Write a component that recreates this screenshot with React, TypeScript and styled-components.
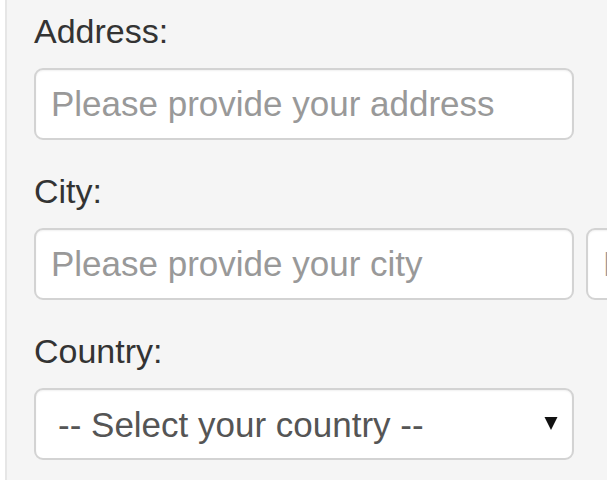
import React from "react";
import styled, { createGlobalStyle } from "styled-components";

const GlobalStyle = createGlobalStyle`
  html, body {
    margin: 0;
    padding: 0;
    background: #ffffff;
    font-family: "Liberation Sans", Arial, sans-serif;
  }
`;

const App: React.FC = () => {
  return (
    <>
      <GlobalStyle />
      <Panel>
        <Group>
          <Label htmlFor="address">Address:</Label>
          <Input id="address" placeholder="Please provide your address" />
        </Group>

        <Group>
          <Label htmlFor="city">City:</Label>
          <Row>
            <Input id="city" placeholder="Please provide your city" />
            <Input id="zip" placeholder="Please provide your zip" />
          </Row>
        </Group>

        <Group>
          <Label htmlFor="country">Country:</Label>
          <SelectWrap>
            <Select id="country" defaultValue="">
              <option value="">-- Select your country --</option>
            </Select>
            <Arrow viewBox="0 0 14 13">
              <polygon points="0.5,0 13.5,0 7,13" />
            </Arrow>
          </SelectWrap>
        </Group>
      </Panel>
    </>
  );
};

export default App;

// Styled Components
const Panel = styled.div`
  margin-left: 5px;
  padding: 11px 0 20px 27px;
  background-color: #f5f5f5;
  border-left: 2px solid #e6e6e6;
  overflow: hidden;
  display: flex;
  flex-direction: column;
  gap: 31px;
`;

const Group = styled.div`
  display: flex;
  flex-direction: column;
  gap: 16px;
`;

const Label = styled.label`
  font-size: 34px;
  line-height: 41px;
  color: #333333;
`;

const Row = styled.div`
  display: flex;
  gap: 12px;
  width: 700px;
`;

const fieldBase = `
  box-sizing: border-box;
  width: 540px;
  height: 72px;
  flex-shrink: 0;
  padding: 0 15px;
  font-family: "Liberation Sans", Arial, sans-serif;
  font-size: 35px;
  background: #ffffff;
  border: 2px solid #d3d3d3;
  border-radius: 9px;
  box-shadow: inset 0 1px 2px rgba(0, 0, 0, 0.06);
  outline: none;
`;

const Input = styled.input`
  ${fieldBase}
  color: #555555;

  &::placeholder {
    color: #999999;
  }
`;

const SelectWrap = styled.div`
  position: relative;
  width: 540px;
`;

const Select = styled.select`
  ${fieldBase}
  appearance: none;
  padding-left: 22px;
  color: #555555;
`;

const Arrow = styled.svg`
  position: absolute;
  right: 16px;
  top: 29px;
  width: 14px;
  height: 13px;
  fill: #111111;
  pointer-events: none;
`;
